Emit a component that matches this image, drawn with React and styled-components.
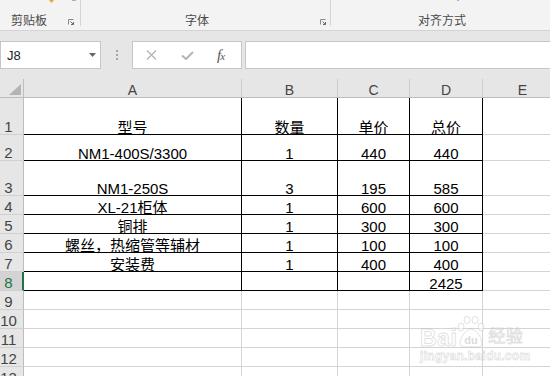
import React from 'react';
import styled, { createGlobalStyle } from 'styled-components';

const GlobalStyle = createGlobalStyle`
  *, *::before, *::after { box-sizing: border-box; }
  html, body { margin: 0; padding: 0; width: 550px; height: 376px; overflow: hidden; background: #fff; }
  body { font-family: "Liberation Sans", "Noto Sans CJK SC", sans-serif; }
`;

const Page = styled.div`
  position: relative;
  width: 550px;
  height: 376px;
  overflow: hidden;
  display: flex;
  flex-direction: column;
  background: #e6e6e6;
`;

/* ---------- Ribbon ---------- */
const Ribbon = styled.div`
  display: flex;
  height: 31px;
  flex-shrink: 0;
  background: #f3f3f3;
  border-bottom: 1px solid #d4d4d4;
`;
const Group = styled.div`
  display: flex;
  flex-direction: column;
  width: ${p => (p.$w ? `${p.$w}px` : 'auto')};
  flex: ${p => (p.$w ? 'none' : '1')};
`;
const IconRow = styled.div`
  height: 12px;
  display: flex;
  align-items: flex-start;
  padding-left: ${p => p.$pl || 0}px;
  gap: ${p => p.$gap || 0}px;
`;
const LabelRow = styled.div`
  display: flex;
  align-items: flex-start;
  height: 15px;
  padding-left: ${p => p.$pl}px;
  padding-right: ${p => p.$pr || 0}px;
`;
const GroupLabel = styled.span`
  font: 12px/15px "Noto Sans CJK SC", sans-serif;
  color: #4a4a4a;
  white-space: nowrap;
`;
const Launcher = styled.svg`
  margin-left: auto;
  margin-top: 7px;
  flex: none;
`;
const Sep = styled.div`
  width: 1px;
  height: 26px;
  flex: none;
  background: #d5d5d5;
`;
const Stub = styled.div`
  width: ${p => p.$w}px;
  height: 1px;
  background: #b0b0b0;
`;

/* ---------- Formula bar ---------- */
const FormulaStrip = styled.div`
  display: flex;
  height: 28px;
  margin: 10px 0;
  flex-shrink: 0;
`;
const NameBox = styled.div`
  width: 101px;
  flex: none;
  display: flex;
  align-items: center;
  padding: 0 4px 0 6px;
  background: #fff;
  border: 1px solid #c6c6c6;
  font: 13px "Liberation Sans", sans-serif;
  color: #222;
`;
const NameText = styled.span`
  flex: 1;
`;
const Dots = styled.div`
  width: 31px;
  flex: none;
  display: flex;
  flex-direction: column;
  align-items: center;
  justify-content: center;
  gap: 2px;
`;
const Dot = styled.span`
  width: 2px;
  height: 2px;
  background: #a6a6a6;
`;
const FxBox = styled.div`
  width: 110px;
  flex: none;
  display: flex;
  align-items: center;
  padding-left: 13px;
  background: #fff;
  border: 1px solid #c6c6c6;
`;
const FxIcon = styled.svg`
  flex: none;
  margin-right: ${p => p.$mr || 0}px;
`;
const FxLabel = styled.span`
  font: italic 15px "Liberation Serif", serif;
  color: #555;
  letter-spacing: -1px;
  line-height: 1;
  & small { font-size: 11px; }
`;
const FormulaInput = styled.div`
  flex: 1;
  margin-left: 3px;
  background: #fff;
  border: 1px solid #c6c6c6;
  border-right: none;
`;

/* ---------- Sheet ---------- */
const Sheet = styled.div`
  flex: 1;
  display: flex;
  flex-direction: column;
  background: #fff;
`;
const Row = styled.div`
  display: grid;
  grid-template-columns: 24px 218px 96px 72px 73px 80px;
  grid-template-rows: 100%;
  height: ${p => p.$h}px;
  flex: none;
`;
const Corner = styled.div`
  background: #e6e6e6;
  border-right: 1px solid #bdbdbd;
  border-bottom: 1px solid #bdbdbd;
  display: flex;
  justify-content: flex-end;
  align-items: flex-end;
  padding: 0 2px 2px 0;
`;
const ColHead = styled.div`
  background: #e6e6e6;
  border-right: 1px solid #cdcdcd;
  border-bottom: 1px solid #bdbdbd;
  text-align: center;
  padding-top: 3px;
  font: 14px/16px "Liberation Sans", sans-serif;
  color: #444;
`;
const RowHead = styled.div`
  background: ${p => (p.$sel ? '#d3d3d3' : '#e6e6e6')};
  border-right: ${p => (p.$sel ? '2px solid #217346' : '1px solid #bdbdbd')};
  border-bottom: 1px solid #d0d0d0;
  display: flex;
  align-items: flex-end;
  justify-content: center;
  padding-right: ${p => (p.$sel ? 5 : 6)}px;
  font: 15px/15px "Liberation Sans", sans-serif;
  color: ${p => (p.$sel ? '#217346' : '#444')};
  white-space: nowrap;
`;
const Cell = styled.div`
  border-right: 1px solid ${p => p.$rc};
  border-bottom: 1px solid ${p => p.$bc};
  display: flex;
  align-items: flex-end;
  justify-content: center;
  font: 15px/13px "Liberation Sans", "Noto Sans CJK SC", sans-serif;
  color: #000;
  white-space: nowrap;
`;

/* ---------- Watermark ---------- */
const Watermark = styled.div`
  position: absolute;
  left: 420px;
  top: 315px;
  display: flex;
  flex-direction: column;
  align-items: flex-start;
  pointer-events: none;
`;
const WmTop = styled.div`
  display: flex;
  align-items: flex-end;
  height: 33px;
`;
const WmBig = styled.span`
  font: bold 23px/20px "Liberation Sans", "Noto Sans CJK SC", sans-serif;
  color: rgba(255, 255, 255, 0.5);
  -webkit-text-stroke: 1px rgba(170, 170, 170, 0.35);
  letter-spacing: 0.5px;
`;
const WmCjk = styled(WmBig)`
  font-size: 17px;
  font-weight: normal;
  margin-left: 3px;
  margin-bottom: 1px;
`;
const WmUrl = styled.span`
  margin-top: 2px;
  font: bold 12px/13px "Liberation Sans", sans-serif;
  color: rgba(255, 255, 255, 0.5);
  -webkit-text-stroke: 0.8px rgba(170, 170, 170, 0.35);
  letter-spacing: 0.3px;
`;

const GRID = '#d4d4d4';
const BLACK = '#000';

const rows = [
  { n: 1, h: 37, cells: ['型号', '数量', '单价', '总价'] },
  { n: 2, h: 26, cells: ['NM1-400S/3300', '1', '440', '440'] },
  { n: 3, h: 35, cells: ['NM1-250S', '3', '195', '585'] },
  { n: 4, h: 19, cells: ['XL-21柜体', '1', '600', '600'] },
  { n: 5, h: 19, cells: ['铜排', '1', '300', '300'] },
  { n: 6, h: 19, cells: ['螺丝，热缩管等辅材', '1', '100', '100'] },
  { n: 7, h: 19, cells: ['安装费', '1', '400', '400'] },
  { n: 8, h: 19, cells: ['', '', '', '2425'], sel: true },
  { n: 9, h: 19, cells: ['', '', '', ''] },
  { n: 10, h: 19, cells: ['', '', '', ''] },
  { n: 11, h: 19, cells: ['', '', '', ''] },
  { n: 12, h: 19, cells: ['', '', '', ''] },
  { n: 13, h: 19, cells: ['', '', '', ''] },
];

const LauncherIcon = () => (
  <Launcher width="6" height="6" viewBox="0 0 6 6">
    <path d="M0.5 5.5V0.5H5.5" fill="none" stroke="#8a8a8a" strokeWidth="1" />
    <path d="M2.5 2.5L5.5 5.5M3 5.5H5.5V3" fill="none" stroke="#6a6a6a" strokeWidth="1" />
  </Launcher>
);

export default function App() {
  return (
    <Page>
      <GlobalStyle />
      <Ribbon>
        <Group $w={80}>
          <IconRow $pl={49} $gap={18}>
            <svg width="5" height="3" viewBox="0 0 5 3">
              <polygon points="0,0 5,0 2.5,3" fill="#f0a33a" />
            </svg>
            <Stub $w={4} />
          </IconRow>
          <LabelRow $pl={11} $pr={6}>
            <GroupLabel>剪贴板</GroupLabel>
            <LauncherIcon />
          </LabelRow>
        </Group>
        <Sep />
        <Group $w={249}>
          <IconRow />
          <LabelRow $pl={104} $pr={4}>
            <GroupLabel>字体</GroupLabel>
            <LauncherIcon />
          </LabelRow>
        </Group>
        <Sep />
        <Group>
          <IconRow $pl={126}>
            <Stub $w={2} />
          </IconRow>
          <LabelRow $pl={87}>
            <GroupLabel>对齐方式</GroupLabel>
          </LabelRow>
        </Group>
      </Ribbon>

      <FormulaStrip>
        <NameBox>
          <NameText>J8</NameText>
          <svg width="7" height="4" viewBox="0 0 7 4">
            <polygon points="0,0 7,0 3.5,4" fill="#666" />
          </svg>
        </NameBox>
        <Dots>
          <Dot />
          <Dot />
          <Dot />
        </Dots>
        <FxBox>
          <FxIcon width="11" height="10" viewBox="0 0 11 10" $mr={24}>
            <path d="M1 0.5L10 9.5M10 0.5L1 9.5" stroke="#b4b4b4" strokeWidth="1.3" fill="none" />
          </FxIcon>
          <FxIcon width="13" height="9" viewBox="0 0 13 9" $mr={23}>
            <polyline points="1,4.5 5,8 12,1" stroke="#b4b4b4" strokeWidth="2" fill="none" />
          </FxIcon>
          <FxLabel>
            f<small>x</small>
          </FxLabel>
        </FxBox>
        <FormulaInput />
      </FormulaStrip>

      <Sheet>
        <Row $h={19}>
          <Corner>
            <svg width="12" height="11" viewBox="0 0 12 11">
              <polygon points="12,0 12,11 0,11" fill="#b4b4b4" />
            </svg>
          </Corner>
          {['A', 'B', 'C', 'D', 'E'].map(c => (
            <ColHead key={c}>{c}</ColHead>
          ))}
        </Row>
        {rows.map(r => {
          const inTable = r.n <= 8;
          return (
            <Row key={r.n} $h={r.h}>
              <RowHead $sel={r.sel}>{r.n}</RowHead>
              {r.cells.map((c, i) => (
                <Cell key={i} $rc={inTable ? BLACK : GRID} $bc={inTable ? BLACK : GRID}>
                  {c}
                </Cell>
              ))}
              <Cell $rc={GRID} $bc={GRID} />
            </Row>
          );
        })}
      </Sheet>

      <Watermark>
        <WmTop>
          <WmBig>Bai</WmBig>
          <svg width="28" height="32" viewBox="0 0 28 32">
            <g fill="rgba(255,255,255,0.5)" stroke="rgba(170,170,170,0.35)" strokeWidth="1">
              <ellipse cx="4" cy="11" rx="3" ry="4" />
              <ellipse cx="10" cy="4" rx="3" ry="3.6" />
              <ellipse cx="18" cy="4" rx="3" ry="3.6" />
              <ellipse cx="24" cy="11" rx="3" ry="4" />
              <path d="M14 13c-5 0-11 9-11 14 0 3 2 4 5 4h12c3 0 5-1 5-4 0-5-6-14-11-14z" />
            </g>
            <text
              x="14"
              y="28"
              textAnchor="middle"
              fontFamily="Liberation Sans, sans-serif"
              fontWeight="bold"
              fontSize="11"
              fill="rgba(160,160,160,0.4)"
            >
              du
            </text>
          </svg>
          <WmCjk>经验</WmCjk>
        </WmTop>
        <WmUrl>jingyan.baidu.com</WmUrl>
      </Watermark>
    </Page>
  );
}
